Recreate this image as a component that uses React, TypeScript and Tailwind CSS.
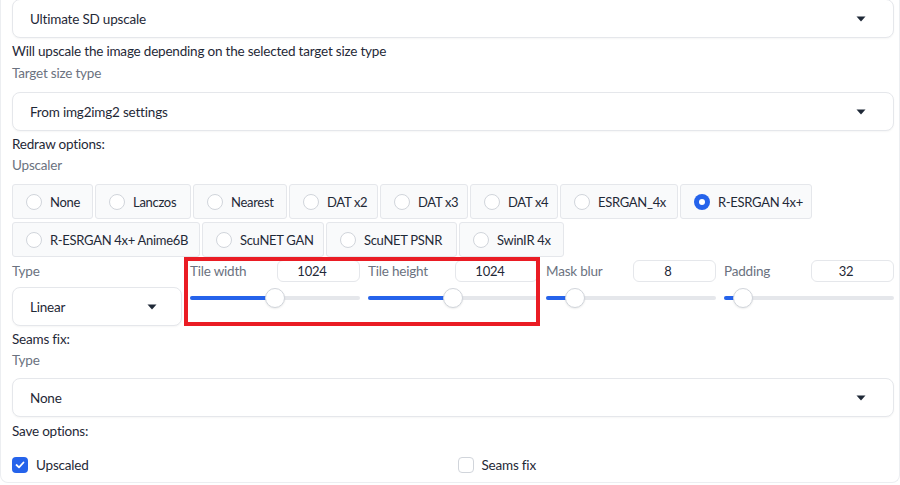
import React from "react";

const font = { fontFamily: "Lato, 'Noto Sans', sans-serif" };

function Arrow() {
  return (
    <svg width="10" height="6" viewBox="0 0 10 6" className="shrink-0">
      <path d="M0.5 0.5 L9.5 0.5 L5 5.5 Z" fill="#1f2937" />
    </svg>
  );
}

function Dropdown({ value, className = "" }: { value: string; className?: string }) {
  return (
    <div
      className={`flex items-center justify-between h-[39px] pl-[17px] pr-[27px] bg-white border border-[#e5e7eb] rounded-lg shadow-[0_1px_2px_rgba(0,0,0,0.04)] text-[#1f2937] ${className}`}
    >
      <span>{value}</span>
      <Arrow />
    </div>
  );
}

// widths read off the screenshot so both rows line up
const upscalers: [string, number][][] = [
  [
    ["None", 81],
    ["Lanczos", 96],
    ["Nearest", 94],
    ["DAT x2", 89],
    ["DAT x3", 88],
    ["DAT x4", 88],
    ["ESRGAN_4x", 118],
    ["R-ESRGAN 4x+", 132],
  ],
  [
    ["R-ESRGAN 4x+ Anime6B", 188],
    ["ScuNET GAN", 122],
    ["ScuNET PSNR", 131],
    ["SwinIR 4x", 105],
  ],
];

function Radio({ label, width, checked }: { label: string; width: number; checked?: boolean }) {
  return (
    <div
      className="flex items-center gap-2 h-[35px] pl-[13px] bg-[#f9fafb] border border-[#e5e7eb] rounded-[3px] text-[#1f2937] whitespace-nowrap overflow-hidden shrink-0"
      style={{ width }}
    >
      {checked ? (
        <span className="w-4 h-4 shrink-0 rounded-full bg-[#2563eb] flex items-center justify-center">
          <span className="w-[6px] h-[6px] rounded-full bg-white" />
        </span>
      ) : (
        <span className="w-4 h-4 shrink-0 rounded-full border border-[#d1d5db] bg-white" />
      )}
      <span className="text-[13px] tracking-[-0.3px]">{label}</span>
    </div>
  );
}

function Slider({ label, value, min, max }: { label: string; value: number; min: number; max: number }) {
  const p = (value - min) / (max - min);
  const pos = 10 + 150 * p;
  return (
    <div className="flex flex-col w-[170px]">
      <div className="flex items-center justify-between h-[22px]">
        <span className="text-[#6b7280]">{label}</span>
        <div className="w-[83px] h-[22px] flex items-center justify-center pr-[13px] bg-white border border-[#e5e7eb] rounded-md text-[13px] text-[#1f2937]">
          {value}
        </div>
      </div>
      <div className="relative h-[20px] mt-[6px]">
        <div className="absolute left-0 right-0 top-[8px] h-[4px] rounded-full bg-[#e5e7eb]" />
        <div
          className="absolute left-0 top-[8px] h-[4px] rounded-full bg-[#2563eb]"
          style={{ width: pos }}
        />
        <div
          className="absolute top-0 w-5 h-5 -ml-[10px] rounded-full bg-white border border-[#d1d5db] shadow-[0_1px_2px_rgba(0,0,0,0.08)]"
          style={{ left: pos }}
        />
      </div>
    </div>
  );
}

function Check({ label, checked }: { label: string; checked?: boolean }) {
  return (
    <div className="flex items-center gap-2 text-[#1f2937]">
      {checked ? (
        <span className="w-4 h-4 rounded-[4px] bg-[#2563eb] flex items-center justify-center">
          <svg width="10" height="8" viewBox="0 0 10 8">
            <path d="M1.5 4 L4 6.3 L8.5 1.5" stroke="white" strokeWidth="1.8" fill="none" strokeLinecap="round" strokeLinejoin="round" />
          </svg>
        </span>
      ) : (
        <span className="w-4 h-4 rounded-[4px] border border-[#d1d5db] bg-white" />
      )}
      <span>{label}</span>
    </div>
  );
}

export default function App() {
  return (
    <div className="w-[900px] h-[485px] overflow-hidden bg-white text-[13.5px] tracking-[-0.2px]" style={font}>
      <div className="h-[484px] border-l border-r border-b border-[#eceef1] rounded-b-lg pl-[11px] pr-[5px] leading-[20px]">
        <Dropdown value="Ultimate SD upscale" className="-mt-px" />
        <div className="mt-[3px] text-[#1f2937]">
          Will upscale the image depending on the selected target size type
        </div>
        <div className="mt-[2px] text-[#6b7280]">Target size type</div>
        <Dropdown value="From img2img2 settings" className="mt-[9px]" />
        <div className="mt-[3px] text-[#1f2937]">Redraw options:</div>
        <div className="mt-px text-[#6b7280]">Upscaler</div>
        <div className="mt-[9px] flex flex-col gap-[3px]">
          {upscalers.map((row, i) => (
            <div key={i} className="flex gap-[2px]">
              {row.map(([u, w]) => (
                <Radio key={u} label={u} width={w} checked={u === "R-ESRGAN 4x+"} />
              ))}
            </div>
          ))}
        </div>
        <div className="relative flex gap-2 mt-[3px]">
          <div className="flex flex-col w-[170px]">
            <div className="h-[22px] flex items-center text-[#6b7280]">Type</div>
            <div className="mt-[5px] flex items-center justify-between h-[39px] pl-[17px] pr-[24px] bg-white border border-[#e5e7eb] rounded-lg shadow-[0_1px_2px_rgba(0,0,0,0.04)] text-[#1f2937]">
              <span>Linear</span>
              <Arrow />
            </div>
          </div>
          <Slider label="Tile width" value={1024} min={0} max={2048} />
          <Slider label="Tile height" value={1024} min={0} max={2048} />
          <Slider label="Mask blur" value={8} min={0} max={64} />
          <Slider label="Padding" value={32} min={0} max={512} />
          <div className="absolute left-[172px] top-[-3px] w-[356px] h-[69px] border-[4px] border-[#ea1c24] pointer-events-none" />
        </div>
        <div className="mt-[3px] text-[#1f2937]">Seams fix:</div>
        <div className="mt-px text-[#6b7280]">Type</div>
        <Dropdown value="None" className="mt-[8px]" />
        <div className="mt-[4px] text-[#1f2937]">Save options:</div>
        <div className="mt-[14px] grid grid-cols-2 gap-2 w-[883px]">
          <Check label="Upscaled" checked />
          <Check label="Seams fix" />
        </div>
      </div>
    </div>
  );
}
